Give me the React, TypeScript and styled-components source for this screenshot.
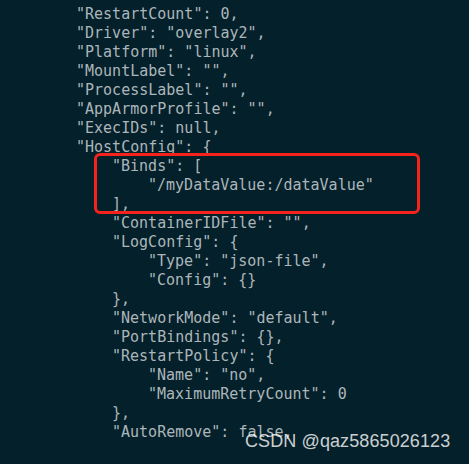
import React from "react";
import styled, { createGlobalStyle } from "styled-components";

const Global = createGlobalStyle`
  html, body { margin: 0; padding: 0; background: #04202a; }
  body { width: 469px; height: 464px; overflow: hidden; }
`;

const Terminal = styled.div`
  position: relative;
  width: 469px;
  height: 464px;
  box-sizing: border-box;
  padding: 5px 0 0 4px;
  background: #04202a;
  color: #acb6ba;
  font-family: "DejaVu Sans Mono", "Liberation Mono", monospace;
  font-size: 15px;
  line-height: 19px;
  overflow: hidden;
`;

const Line = styled.div<{ $level: number }>`
  white-space: pre;
  padding-left: ${(p) => 72 + p.$level * 36}px;
  height: 19px;
`;

const Highlight = styled.div`
  position: relative;
  &::before {
    content: "";
    position: absolute;
    left: 90px;
    top: -4px;
    width: 320px;
    height: 55px;
    border: 3px solid #f5231b;
    border-radius: 6px;
  }
`;

const Watermark = styled.div`
  position: absolute;
  left: 245px;
  top: 432px;
  font-family: "Liberation Sans", Arial, sans-serif;
  font-size: 18px;
  color: rgba(255, 255, 255, 0.8);
  white-space: nowrap;
  letter-spacing: 0.1px;
`;

type L = [number, string];

const before: L[] = [
  [0, '"RestartCount": 0,'],
  [0, '"Driver": "overlay2",'],
  [0, '"Platform": "linux",'],
  [0, '"MountLabel": "",'],
  [0, '"ProcessLabel": "",'],
  [0, '"AppArmorProfile": "",'],
  [0, '"ExecIDs": null,'],
  [0, '"HostConfig": {'],
];

const binds: L[] = [
  [1, '"Binds": ['],
  [2, '"/myDataValue:/dataValue"'],
  [1, "],"],
];

const after: L[] = [
  [1, '"ContainerIDFile": "",'],
  [1, '"LogConfig": {'],
  [2, '"Type": "json-file",'],
  [2, '"Config": {}'],
  [1, "},"],
  [1, '"NetworkMode": "default",'],
  [1, '"PortBindings": {},'],
  [1, '"RestartPolicy": {'],
  [2, '"Name": "no",'],
  [2, '"MaximumRetryCount": 0'],
  [1, "},"],
  [1, '"AutoRemove": false,'],
];

const render = (ls: L[], k: string) =>
  ls.map(([lvl, t], i) => (
    <Line key={k + i} $level={lvl}>
      {t}
    </Line>
  ));

export default function App() {
  return (
    <>
      <Global />
      <Terminal>
        {render(before, "a")}
        <Highlight>{render(binds, "b")}</Highlight>
        {render(after, "c")}
        <Watermark>CSDN @qaz5865026123</Watermark>
      </Terminal>
    </>
  );
}
